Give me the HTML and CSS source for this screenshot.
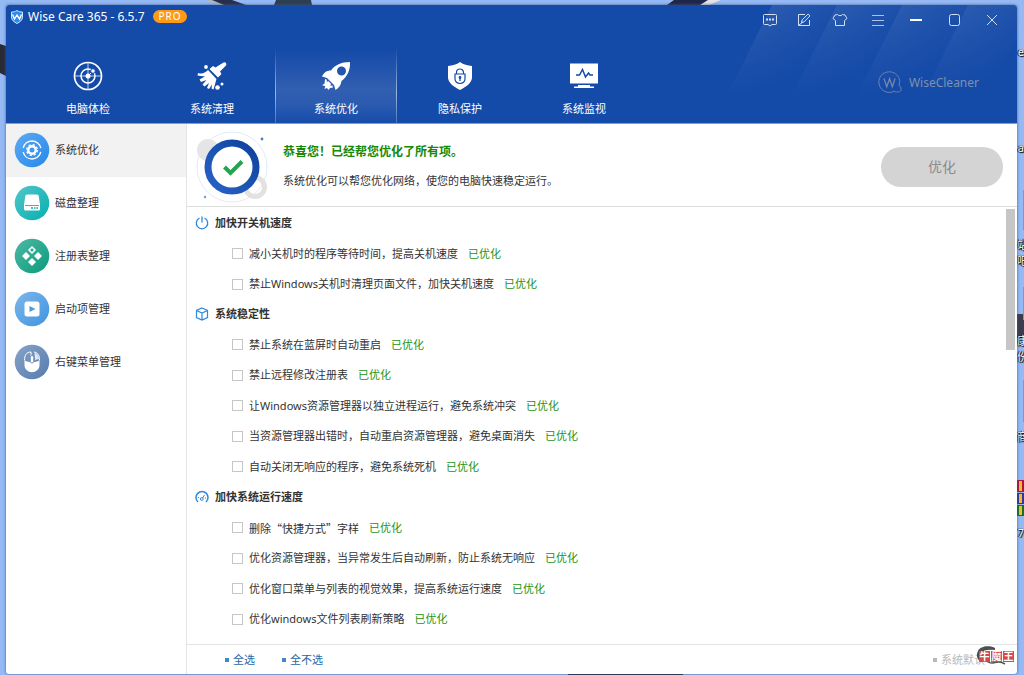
FILE: index.html
```html
<!DOCTYPE html>
<html lang="zh-CN">
<head>
<meta charset="utf-8">
<title>Wise Care 365</title>
<link rel="stylesheet" href="styles.css">
</head>
<body>
<div class="desktop" aria-hidden="true">
  <svg class="wallpaper" viewBox="0 0 1024 675" preserveAspectRatio="none">
    <path d="M0 44l6 2v30l-6-3z" fill="#292a36"/>
    <path d="M206 0h12l14 5h-12z" fill="#b7b4b4"/>
    <path d="M212 0h20l14 5h-22z" fill="#262f4c"/>
    <path d="M276 0h35l1 5h-38z" fill="#2c3e50"/>
    <path d="M700 0h21l-12 5h-14z" fill="#e4e2e2"/>
    <path d="M674 0h34l-8 5h-33z" fill="#20264a"/>
    <path d="M1017 314h7v24h-7z" fill="#3b3d4e"/>
    <path d="M1023 190h1v40h-1zM1023 287h1v33h-1zM1023 380h1v42h-1z" fill="#8d98a5"/>
    <path d="M1017 480h7v12h-7z" fill="#b3123f"/>
    <path d="M1017 493h7v11h-7z" fill="#3034a4"/>
    <path d="M1017 505h7v11h-7z" fill="#117126"/>
    <path d="M1019 481h3v10h-3zM1019 494h3v9h-3zM1019 506h3v9h-3z" fill="#f5bd28"/>
    <path d="M568 674h115v1h-115z" fill="#292a36"/>
  </svg>
  <span class="shortcut s1">e</span>
  <span class="shortcut s2">a</span>
  <span class="shortcut s3">站</span>
  <span class="shortcut s4">吧</span>
  <span class="shortcut s5">康</span>
  <span class="shortcut s6">份</span>
  <span class="shortcut s7">商</span>
  <span class="shortcut s8">7</span>
</div>

<div class="window">
  <header class="header">
    <svg class="streaks" width="317" height="100" viewBox="0 0 317 100">
      <defs>
        <linearGradient id="streak" x1="0" y1=".2" x2="1" y2=".8"><stop offset=".1" stop-color="#fff" stop-opacity=".12"/><stop offset=".75" stop-color="#fff" stop-opacity=".02"/></linearGradient>
        <linearGradient id="fade" x1="0" y1="0" x2="0" y2="1"><stop stop-color="#fff"/><stop offset="1" stop-color="#000"/></linearGradient>
        <mask id="fade-mask"><path d="M0 0h317v100H0z" fill="url(#fade)"/></mask>
      </defs>
      <g fill="url(#streak)" mask="url(#fade-mask)"><path d="M72 0h65L87 100H22z"/><path d="M137 0h65l-50 100H87z"/><path d="M202 0h66l-50 100h-66z"/><path d="M268 0h66l-50 100h-66z"/></g>
    </svg>
    <div class="titlebar">
      <svg class="logo" width="12" height="14" viewBox="0 0 12 14"><path d="M6 .5C7.500 1.600 9.500 2 11.500 2v5c0 3.200-2.700 5-5.500 6.500C3.200 12 .5 10.200.5 7V2C2.500 2 4.500 1.600 6 .5z" fill="#2b8af0" stroke="#cfe5ff"/><path d="M1.500 4.500l2 4.500L6 5l2.500 4 2-4.500" fill="none" stroke="#fff" stroke-width="1.400"/></svg>
      <h1 class="app-name">Wise Care 365 - 6.5.7</h1>
      <span class="pro">PRO</span>
      <div class="controls">
        <button class="control control-narrow" aria-label="反馈"><svg width="16" height="16" viewBox="0 0 16 16"><path d="M2.500 2.500h11a1 1 0 0 1 1 1v8a1 1 0 0 1-1 1H10l-2 1.500-2-1.500H2.500a1 1 0 0 1-1-1v-8a1 1 0 0 1 1-1z"/><path d="M4 7.500h2M7 7.500h2M10 7.500h2" stroke-width="2"/></svg></button>
        <button class="control control-narrow" aria-label="编辑"><svg width="16" height="16" viewBox="0 0 16 16"><path d="M9 2.500H2.500v11h11V8M5.500 10.500l.6-2.600 6-5.900 1.900 1.900-6 6zM3 13l4-3"/></svg></button>
        <button class="control" aria-label="皮肤"><svg width="16" height="16" viewBox="0 0 16 16"><path d="M5.500 2.500c1 1.500 4 1.500 5 0l2.500.5 2 3.500-2.500 2v5h-9v-5L1 6.500 3 3z"/></svg></button>
        <button class="control" aria-label="菜单"><svg width="16" height="16" viewBox="0 0 16 16"><path d="M2 3.500h12M2 8.500h12M2 13.500h12" opacity=".8"/></svg></button>
        <button class="control" aria-label="最小化"><svg width="16" height="16" viewBox="0 0 16 16"><path d="M2 8h12" stroke="#fff" stroke-width="2"/></svg></button>
        <button class="control" aria-label="最大化"><svg width="16" height="16" viewBox="0 0 16 16"><rect x="3.500" y="2.500" width="10" height="11" rx="2"/></svg></button>
        <button class="control" aria-label="关闭"><svg width="16" height="16" viewBox="0 0 16 16"><path d="M3 3l10 10M13 3L3 13"/></svg></button>
      </div>
    </div>
    <div class="toolbar">
      <nav class="tabs">
        <button class="tab"><svg width="30" height="30" viewBox="0 0 30 30" fill="none" stroke="#fff"><circle cx="15" cy="15" r="13.500" stroke-width="1.700"/><circle cx="15" cy="15" r="7" stroke-width="1.500"/><path d="M1.500 15h27M15 1.500v27" opacity=".75"/><path d="M15 15l5-5" /><circle cx="15" cy="15" r="2.500" fill="#fff" stroke="none"/><circle cx="20" cy="10" r="2.300" fill="#fff" stroke="#144aa8"/></svg>电脑体检</button>
        <button class="tab"><svg width="30" height="30" viewBox="0 0 30 30" fill="#fff"><path d="M26.500 1.500a2 2 0 0 1 2.500 3L23 10.500l1.500 2.500-3.500 3.500-8.500-8.500L16 5l2.500 1.500z"/><path d="M11 9l8.500 9-1 3.500-2 7-2-1 .5-4-3 4.500-2-1 2-5-4.500 3.500-2-2 4-4.500-5.500 2-1.500-2.500 5.500-3L.5 14.500 1 12c4 1.500 7 0 10-3z"/><circle cx="9" cy="6" r="1.900"/><circle cx="20.500" cy="26.500" r="2.300"/><circle cx="25" cy="23" r="1.500"/></svg>系统清理</button>
        <button class="tab tab-current" aria-current="page"><svg width="30" height="30" viewBox="0 0 30 30" fill="#fff"><path fill-rule="evenodd" d="M29 1c.4 8-2.500 14.500-8.500 19-.5 4-2.500 7-6 9l-1.500-5-7-7-5-1.500c2-4 4.500-6 9-6C14 4 20 1 29 1zm-8.500 4.500a4.500 4.500 0 1 0 0 9 4.500 4.500 0 0 0 0-9z"/><path d="M4 18l2 .7-.5 2 2-.5 2.500 2.500-.7 2 2-.2.7 2-3 .5-1.500 2-1.500-2-2.500 1 .7-2.700L1 24l2.500-1.200z"/></svg>系统优化</button>
        <button class="tab"><svg width="30" height="30" viewBox="0 0 30 30"><path d="M15 1c3.500 2.500 7.500 3.700 12 4v11c0 6-5.500 9.500-12 13C8.500 25.500 3 22 3 16V5c4.500-.3 8.500-1.500 12-4z" fill="#fff"/><g fill="none" stroke="#144aa8" stroke-width="1.200"><path d="M10 13h10v5a5 4.500 0 0 1-10 0zM11.500 13v-1.500a3.500 3.500 0 0 1 7 0V13M15 17v3"/><circle cx="15" cy="16.500" r=".8" fill="#144aa8"/></g></svg>隐私保护</button>
        <button class="tab"><svg width="30" height="30" viewBox="0 0 30 30" fill="#fff"><path d="M1 2.500h28v20H1zM9 24h12v1.500h4V27H5v-1.500h4z"/><path d="M7 14h3.500l3-5.500 3 7.500 3-4 1.500 2h3" fill="none" stroke="#144aa8" stroke-width="1.500"/></svg>系统监视</button>
      </nav>
      <div class="brand">
        <svg width="26" height="26" viewBox="0 0 28 28" fill="none" stroke="#7488af"><path d="M19 22.500C12 27 2 22 2 13 2 2 15-1 21 5c4 4 4 8 2.500 11.500 4 2 3 8-1.500 7-1.500.6-2.800.2-3-1z"/><path d="M7.500 9l3 9 3-8.500 3 8.500 3-9" stroke-width="1.400"/></svg>
        <span>WiseCleaner</span>
      </div>
    </div>
  </header>

  <div class="body">
    <nav class="sidebar">
      <button class="side-item side-current" aria-current="page"><svg width="36" height="36" viewBox="0 0 36 36"><defs><linearGradient id="g1" x1="0" y1="0" x2="1" y2="1"><stop stop-color="#5faaf2"/><stop offset="1" stop-color="#2588ea"/></linearGradient></defs><circle cx="18" cy="18" r="17.300" fill="url(#g1)"/><g fill="none" stroke="#fff"><circle cx="18" cy="18" r="9" stroke-width="1.400" stroke-dasharray="24 4.300" stroke-dashoffset="-2"/><circle cx="18" cy="18" r="3.700" stroke-width="2.400"/><circle cx="18" cy="18" r="5.300" stroke-width="1.400" stroke-dasharray="2.200 1.963"/></g></svg>系统优化</button>
      <button class="side-item"><svg width="36" height="36" viewBox="0 0 36 36"><defs><linearGradient id="g2" x1="0" y1="0" x2="1" y2="1"><stop stop-color="#53c6c9"/><stop offset="1" stop-color="#05afb0"/></linearGradient></defs><circle cx="18" cy="18" r="17.300" fill="url(#g2)"/><path d="M13 9.500h10q1.500 0 1.700 1.500L26 19.500v4.500q0 1.500-1.500 1.500h-13Q10 25.500 10 24v-4.500L11.300 11Q11.500 9.500 13 9.500z" fill="#fff"/><path d="M11 20.500h14" stroke="#35babc"/><path d="M17 23h2M20 23h1.500M22.500 23H24" stroke="#13a8a9" stroke-width="1.500"/></svg>磁盘整理</button>
      <button class="side-item"><svg width="36" height="36" viewBox="0 0 36 36"><defs><linearGradient id="g3" x1="0" y1="0" x2="1" y2="1"><stop stop-color="#4eb8a3"/><stop offset="1" stop-color="#0a9c7d"/></linearGradient></defs><circle cx="18" cy="18" r="17.300" fill="url(#g3)"/><path d="M12 14l4 4-4 4-4-4zM24 14l4 4-4 4-4-4zM18 20l4 4-4 4-4-4z" fill="#fff"/><path d="M18 9l3 3-3 3-3-3z" fill="none" stroke="#fff" stroke-width="1.500"/></svg>注册表整理</button>
      <button class="side-item"><svg width="36" height="36" viewBox="0 0 36 36"><defs><linearGradient id="g4" x1="0" y1="0" x2="1" y2="1"><stop stop-color="#7eb7eb"/><stop offset="1" stop-color="#3f94df"/></linearGradient></defs><circle cx="18" cy="18" r="17.300" fill="url(#g4)"/><rect x="10.500" y="10.500" width="15" height="15" rx="2.500" fill="#fff"/><path d="M15.500 15l6 3-6 3z" fill="#4b9be1"/></svg>启动项管理</button>
      <button class="side-item"><svg width="36" height="36" viewBox="0 0 36 36"><defs><linearGradient id="g5" x1="0" y1="0" x2="1" y2="1"><stop stop-color="#87a3c9"/><stop offset="1" stop-color="#557cae"/></linearGradient></defs><circle cx="18" cy="18" r="17.300" fill="url(#g5)"/><path d="M10.500 16.500c4.500 2 10.500 2 15 0V21c0 9.500-15 9.500-15 0z" fill="#fff"/><path d="M17 8c-4.500 0-6.500 3-6.500 8.500M17 8v4M20 8c4 .5 5.500 3.500 5.500 8.500" fill="none" stroke="#fff"/><path d="M20.500 8.500c3 1 4.500 3.500 4.500 6.500l-4 1z" fill="#dbe5f2"/><rect x="16.300" y="11.500" width="3.400" height="7.500" rx="1.700" fill="#fff" stroke="#7592bb"/></svg>右键菜单管理</button>
    </nav>

    <main class="main">
      <section class="summary">
        <svg class="status-art" width="74" height="76" viewBox="0 0 74 76">
          <defs><linearGradient id="ring" x1="1" y1="0" x2="0" y2="1"><stop stop-color="#0f419c"/><stop offset="1" stop-color="#2863c8"/></linearGradient></defs>
          <circle cx="37" cy="38" r="35" fill="none" stroke="#e2e9f8"/>
          <circle cx="13" cy="21" r="11" fill="#e5e5e5"/>
          <circle cx="60" cy="58" r="9.500" fill="none" stroke="#e2e2e2" stroke-width="5"/>
          <circle cx="37" cy="38" r="24" fill="#fff" stroke="url(#ring)" stroke-width="7"/>
          <path d="M29.500 38l6 6 11.500-11.500" fill="none" stroke="#22a550" stroke-width="4"/>
          <circle cx="67" cy="10" r="1.400" fill="#4c7bd0"/><circle cx="10" cy="68" r="1.200" fill="#6e9ae2"/>
        </svg>
        <div class="summary-text">
          <h2 class="summary-title">恭喜您！已经帮您优化了所有项。</h2>
          <p class="summary-desc">系统优化可以帮您优化网络，使您的电脑快速稳定运行。</p>
        </div>
        <button class="optimize" disabled>优化</button>
      </section>

      <div class="scroll-area">
        <div class="groups">
          <section class="group">
            <h3 class="group-title"><svg width="14" height="14" viewBox="0 0 14 14"><path d="M4.500 2A5.700 5.700 0 1 0 9.500 2M7 .5v6" stroke-width="1.300"/></svg>加快开关机速度</h3>
            <div class="row"><label><input type="checkbox">减小关机时的程序等待时间，提高关机速度</label><span class="done">已优化</span></div>
            <div class="row"><label><input type="checkbox">禁止Windows关机时清理页面文件，加快关机速度</label><span class="done">已优化</span></div>
          </section>
          <section class="group">
            <h3 class="group-title"><svg width="14" height="14" viewBox="0 0 14 14"><path d="M7 1l5.500 2.500v7L7 13l-5.500-2.500v-7zM1.500 3.500L7 6l5.500-2.500M7 6v7" stroke-width="1.200"/></svg>系统稳定性</h3>
            <div class="row"><label><input type="checkbox">禁止系统在蓝屏时自动重启</label><span class="done">已优化</span></div>
            <div class="row"><label><input type="checkbox">禁止远程修改注册表</label><span class="done">已优化</span></div>
            <div class="row"><label><input type="checkbox">让Windows资源管理器以独立进程运行，避免系统冲突</label><span class="done">已优化</span></div>
            <div class="row"><label><input type="checkbox">当资源管理器出错时，自动重启资源管理器，避免桌面消失</label><span class="done">已优化</span></div>
            <div class="row"><label><input type="checkbox">自动关闭无响应的程序，避免系统死机</label><span class="done">已优化</span></div>
          </section>
          <section class="group">
            <h3 class="group-title"><svg width="14" height="14" viewBox="0 0 14 14"><path d="M3 12A6 6 0 1 1 11 12" stroke-width="1.500"/><path d="M9.500 5L7.500 8M3 7.500h1M10 8h1"/><circle cx="6.800" cy="9" r="1.400"/></svg>加快系统运行速度</h3>
            <div class="row"><label class="wide-quotes"><input type="checkbox">删除“快捷方式”字样</label><span class="done">已优化</span></div>
            <div class="row"><label><input type="checkbox">优化资源管理器，当异常发生后自动刷新，防止系统无响应</label><span class="done">已优化</span></div>
            <div class="row"><label><input type="checkbox">优化窗口菜单与列表的视觉效果，提高系统运行速度</label><span class="done">已优化</span></div>
            <div class="row"><label><input type="checkbox">优化windows文件列表刷新策略</label><span class="done">已优化</span></div>
          </section>
        </div>
        <div class="scrollbar"><div class="thumb"></div></div>
      </div>

      <footer class="footer">
        <a class="foot-link" href="#">全选</a>
        <a class="foot-link" href="#">全不选</a>
        <a class="foot-link foot-default" href="#">系统默认</a>
        <div class="stamp">
          <svg width="34" height="22" viewBox="0 0 34 22"><path d="M20 3C15 0 5 1 3 6c-2 4-1 8 2 10l2-2C3 10 6 3 20 5z" fill="#4c4c4c"/><path d="M5 6l5-4M3 9l4-3M13 3l4 1M8 16c5-1 6 3 10 2s7-2 12 1" fill="none" stroke="#555" stroke-width="1.500"/></svg>
          <span class="seals"><b>牛</b><b>魔</b><b>王</b></span>
        </div>
      </footer>
    </main>
  </div>
</div>
</body>
</html>
```
FILE: styles.css
```css
* { box-sizing: border-box; }

body {
  margin: 0;
  height: 100vh;
  padding: 5px 6px 1px 6px;
  overflow: hidden;
  background: #94b9f5;
  color: #333;
  font: 11px/16px "Noto Sans", "Noto Sans CJK SC", sans-serif;
}

button {
  border: 0;
  padding: 0;
  background: none;
  color: inherit;
  font: inherit;
}

h1, h2, h3, p { margin: 0; }
svg { flex: none; display: block; }

.desktop { position: absolute; inset: 0; overflow: hidden; }
.wallpaper { width: 100%; height: 100%; }
.shortcut {
  position: absolute;
  right: -4px;
  color: #fff;
  text-shadow: 0 0 1px #000, 1px 1px 1px #000, -1px 0 1px #000;
}
.s1 { top: 44px; right: 0; }
.s2 { top: 140px; right: 0; }
.s3 { top: 237px; }
.s4 { top: 253px; }
.s5 { top: 333px; }
.s6 { top: 349px; }
.s7 { top: 429px; }
.s8 { top: 525px; right: 0; }

.window {
  position: relative;
  display: flex;
  flex-direction: column;
  height: 100%;
  margin-right: 1px;
  overflow: hidden;
  border-radius: 3px;
  background: #fff;
  box-shadow: 0 0 3px #435a86;
}

.header {
  position: relative;
  display: flex;
  flex-direction: column;
  color: #fff;
  background: #144aa8;
  border-bottom: 1px solid #7f9ed0;
}
.streaks { position: absolute; top: 0; right: 0; }

.titlebar { position: relative; display: flex; align-items: flex-start; height: 44px; padding: 4px 13px 0 5px; }
.logo { margin-top: 1px; }
.app-name { margin: 0 8px 0 5px; font-size: 12px; line-height: 16px; font-weight: 400; white-space: nowrap; }
.pro {
  width: 34px;
  height: 13px;
  margin-top: 1px;
  padding-left: 1px;
  border-radius: 7px;
  background: #ff9a16;
  font-size: 10px;
  line-height: 13px;
  letter-spacing: 1px;
  text-align: center;
}
.controls { display: flex; gap: 14px; margin: 3px 0 0 auto; }
.control { width: 24px; display: grid; place-items: center; }
.control-narrow { width: 20px; }
.control svg { fill: none; stroke: #d5dff0; stroke-width: 1; }

.toolbar { position: relative; display: flex; justify-content: space-between; height: 74px; }
.tabs { display: flex; gap: 2px; padding-left: 21px; }
.tab {
  display: flex;
  flex-direction: column;
  align-items: center;
  gap: 10px;
  width: 122px;
  padding-top: 12px;
}
.tab-current {
  border: 1px solid;
  border-width: 0 1px;
  border-image: linear-gradient(transparent, #9db6de 60%, #4a71b9) 1;
  background: linear-gradient(#144aa8, #315fb1 55%, #2b5bb0 75%, #174caa);
}
.brand { display: flex; align-items: center; gap: 6px; height: 28px; margin: 20px 38px 0 0; color: #8090ad; font-size: 12px; }

.body { display: flex; flex: 1; min-height: 0; }
.sidebar { width: 181px; border-right: 1px solid #e4e4e4; }
.side-item { display: flex; align-items: center; gap: 5px; width: 100%; height: 53px; padding: 0 0 1px 8px; }
.side-current { background: #f2f2f2; }

.main { display: flex; flex: 1; flex-direction: column; min-width: 0; }
.summary { display: flex; align-items: center; height: 83px; padding: 3px 14px 0 8px; border-bottom: 1px solid #dedede; }
.summary-text { display: grid; gap: 13px; margin-left: 14px; }
.summary-title { color: #168a08; font-size: 12px; line-height: 16px; }
.optimize { width: 122px; height: 40px; margin-left: auto; border-radius: 20px; background: #d4d4d4; color: #8b8b8b; font-size: 14px; }

.scroll-area { display: flex; flex: 1; min-height: 0; }
.groups { flex: 1; padding: 1px 0 0 8px; overflow: hidden; }
.group-title { display: flex; align-items: center; gap: 6px; height: 30px; font-size: 11px; }
.group-title svg { fill: none; stroke: #2f87e0; }
.row { display: flex; align-items: center; gap: 10px; height: 30px; padding-left: 37px; }
.row:nth-child(even) { height: 31px; }
.row label { display: flex; align-items: center; gap: 6px; }
.row input { appearance: none; width: 11px; height: 11px; margin: 0; border: 1px solid #c6c6c6; background: #fff; }
.wide-quotes { font-family: "Noto Sans CJK SC", sans-serif; }
.done { color: #1b9412; }
.scrollbar { width: 11px; padding-top: 2px; }
.thumb { width: 9px; height: 141px; background: #c6c6c6; }

.footer { position: relative; display: flex; align-items: center; gap: 27px; height: 30px; padding: 0 8px 0 38px; border-top: 1px solid #e2e2e2; }
.foot-link { display: flex; align-items: center; gap: 4px; color: #1f66a5; text-decoration: none; }
.foot-link::before { content: ""; width: 4px; height: 4px; background: #4187c4; }
.foot-default { margin: 0 24px 0 auto; color: #b8b8b8; }
.foot-default::before { background: #b8b8b8; }
.stamp { position: absolute; top: 0; right: 3px; width: 39px; height: 22px; }
.seals { position: absolute; top: 6px; right: 0; display: flex; gap: 1px; }
.seals b { width: 11px; background: #d84848; color: #fff; font-size: 10px; line-height: 11px; text-align: center; }
```
